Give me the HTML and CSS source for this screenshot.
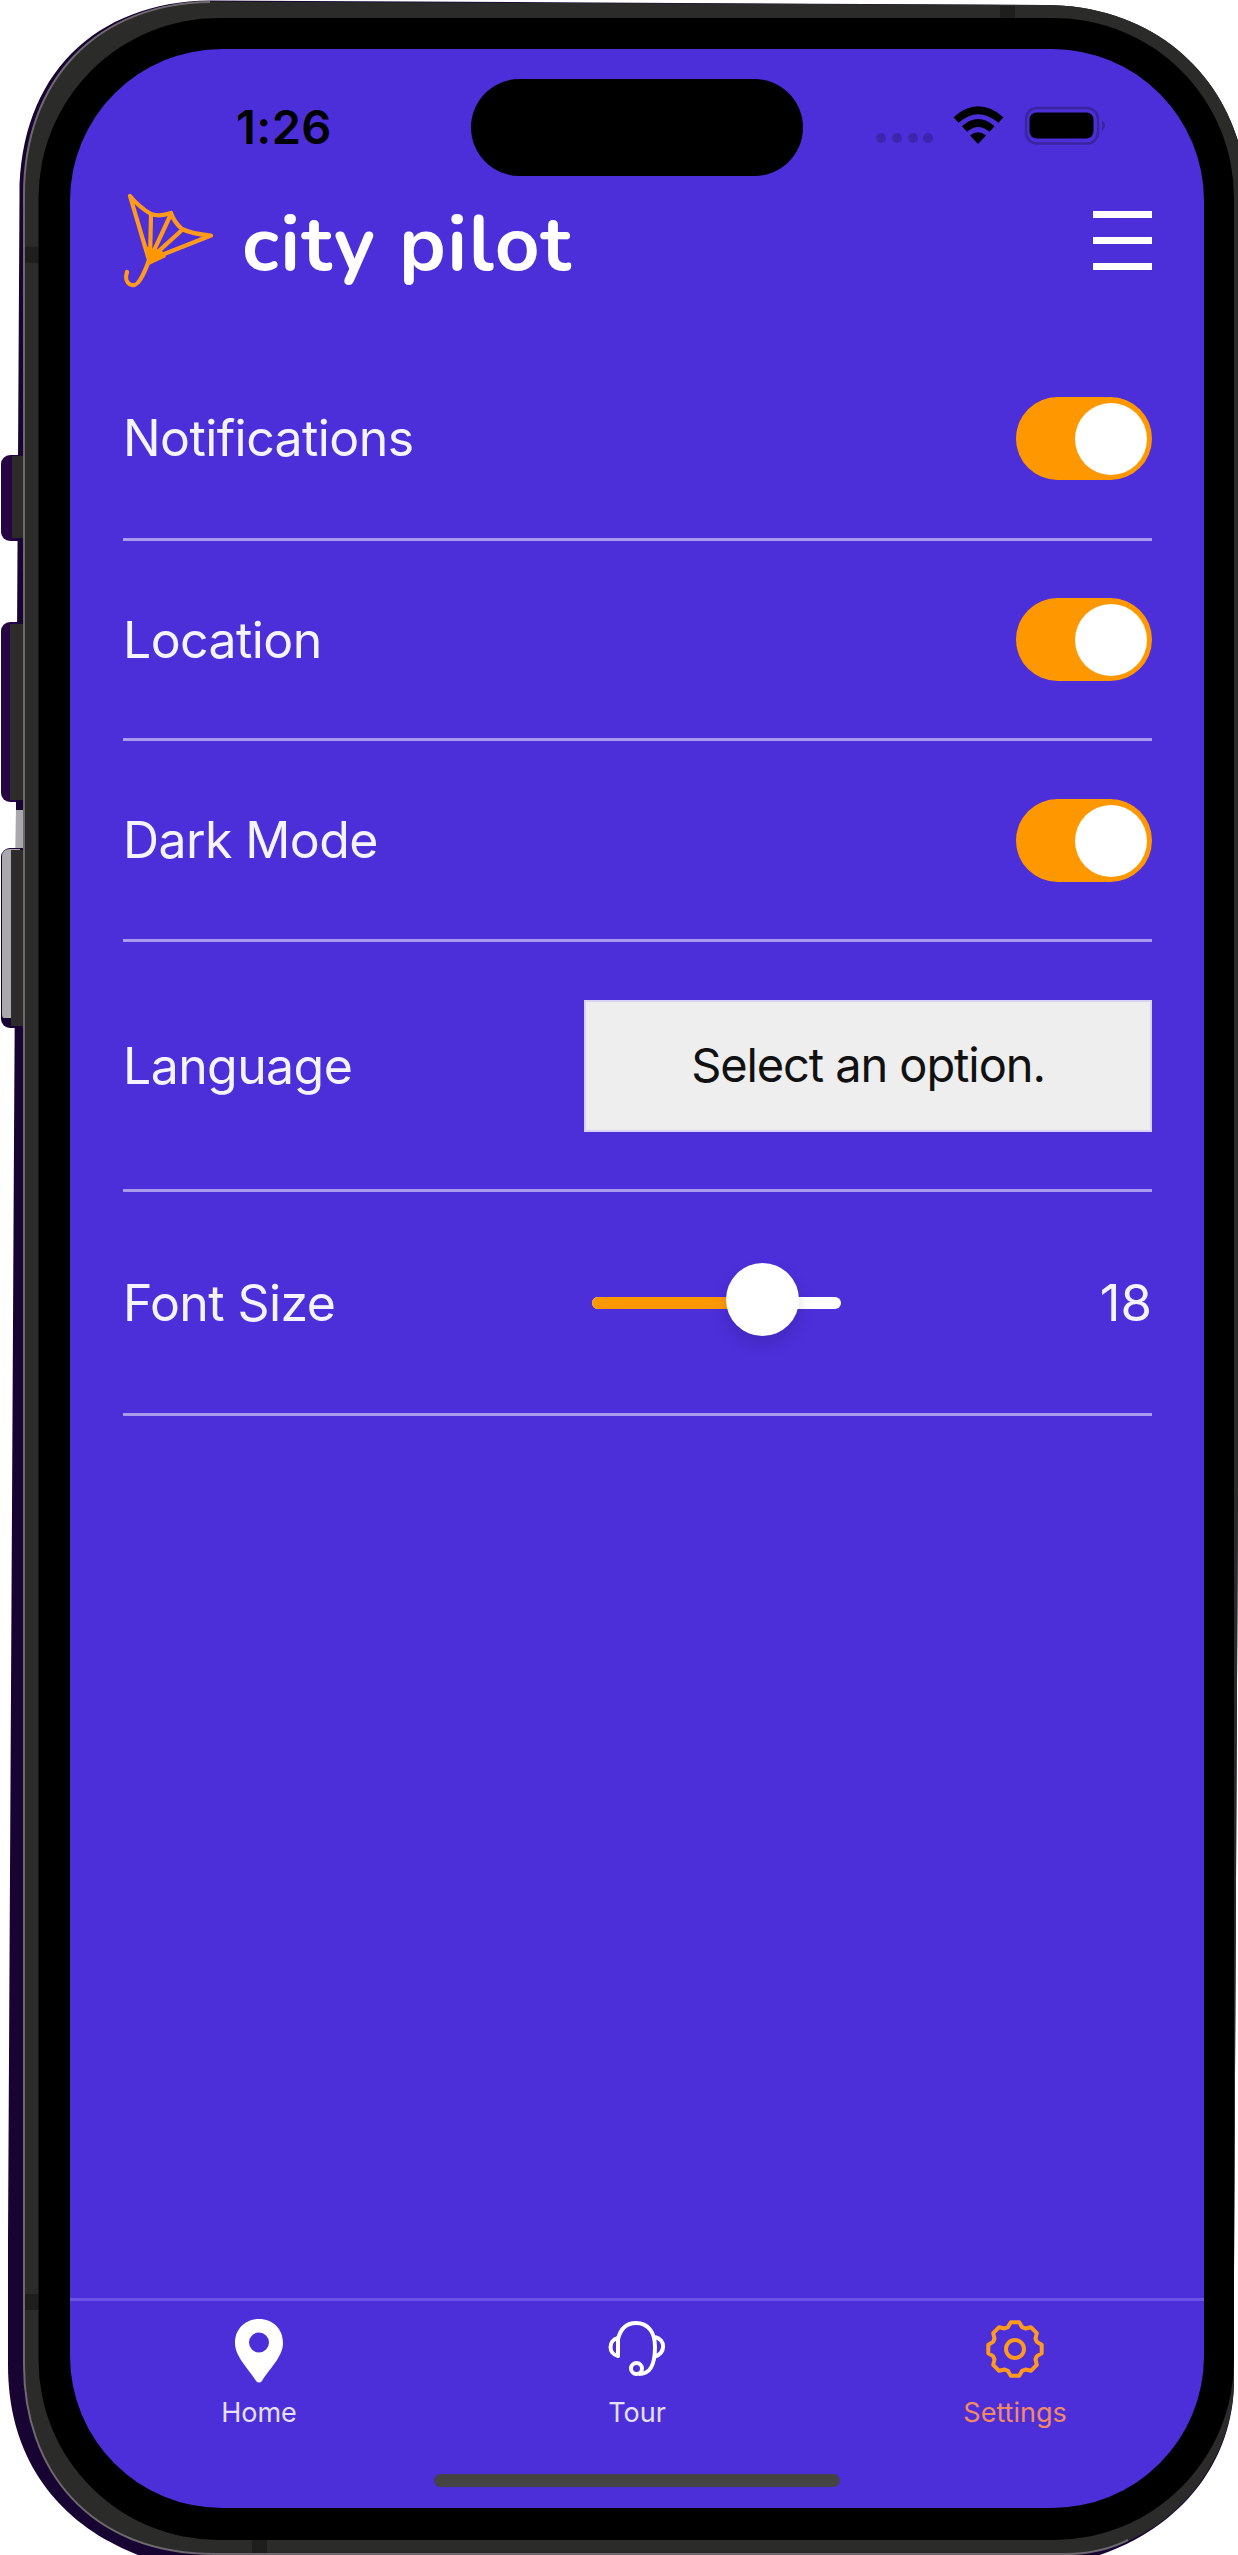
FILE: index.html
```html
<!DOCTYPE html>
<html lang="en">
<head>
<meta charset="utf-8">
<title>city pilot – Settings</title>
<link rel="stylesheet" href="styles.css">
</head>
<body>
<div class="phone">
  <svg class="frame" viewBox="0 0 1238 2555" aria-hidden="true">
    <rect x="1" y="455" width="30" height="86" rx="9" fill="#270545"/>
    <rect x="12" y="456" width="14" height="82" fill="#2d2c2b"/>
    <rect x="1" y="622" width="30" height="180" rx="9" fill="#270545"/>
    <rect x="10" y="624" width="16" height="176" fill="#2d2c2b"/>
    <path d="M210 0.500C95 2 20 75 19.500 195L17 640L14 1140L8 2240V2365C8 2470 70 2535 158 2562H1075C1170 2540 1234 2470 1234 2380V2270L1240 1100V148C1220 70 1150 5 1045 5Z" fill="#180433"/>
    <path d="M16 810H25V1028H16Z" fill="#a9a8ad"/>
    <rect x="1" y="848" width="30" height="180" rx="9" fill="#180433"/>
    <path d="M2 857Q2 849 10 849H20V1018H4Q2 1018 2 1014Z" fill="#a9a8ad"/>
    <rect x="11" y="850" width="15" height="176" fill="#2d2c2b"/>
    <rect x="12" y="456" width="13" height="82" fill="#2d2c2b"/>
    <rect x="10" y="624" width="15" height="176" fill="#2d2c2b"/>
    <path d="M210 1.500C98 3 24 78 23.500 195V2365C23.500 2468 88 2554 215 2554H1065C1160 2554 1234 2470 1234 2380V2270L1240 1100V148C1220 70 1150 5 1045 5Z" fill="#2b2b2a"/>
    <path d="M210 2C98 3.500 24 78 24 195V2365C24 2468 88 2554 215 2554H1065Q1100 2554 1128 2540" fill="none" stroke="#6d696e" stroke-width="2"/>
    <path d="M25 247h14v16H25zM1000 6h15v12h-15zM25 2294h14v16H25zM252 2540h15v13h-15z" fill="#1e1e1d"/>
    <rect x="38.500" y="18" width="1195.500" height="2522" rx="180" fill="#000"/>
  </svg>

  <main class="screen">
    <div class="status">
      <span class="time">1:26</span>
      <span class="island"></span>
      <svg class="indicators" viewBox="0 0 240 50" aria-hidden="true">
        <g fill="#3d26ae"><circle cx="9" cy="38" r="5"/><circle cx="25" cy="38" r="5"/><circle cx="41" cy="38" r="5"/><circle cx="56" cy="38" r="5"/></g>
        <g fill="none" stroke="#000" stroke-width="7.500"><path d="M84 20Q106 0.500 129 20"/><path d="M92.500 29Q106 17 120 29"/></g>
        <path d="M106 44L98 35.500Q106 29 114 35.500Z"/>
        <rect x="154" y="8" width="72" height="35.500" rx="11" fill="none" stroke="#3a249f" stroke-width="2.500"/>
        <rect x="157.500" y="12.500" width="64" height="26" rx="7"/>
        <path d="M230 20Q236 25.500 230 31Z" fill="#3a249f"/>
      </svg>
    </div>

    <header class="header">
      <svg class="logo" viewBox="0 0 92 100" aria-hidden="true">
        <g fill="none" stroke="#ff9a1c" stroke-width="4.200" stroke-linecap="round" stroke-linejoin="round">
          <path d="M8 4L27 68L89 43.500Q70 42 60 37Q52 30 49 21Q38 25 29 22Q17 15 8 4Z"/>
          <path d="M29 23L28 67L49 22M28 67L60 38"/>
          <path d="M27 68Q23 80 18 88C12 98 1 92 5 80"/>
        </g>
        <path d="M23 53L30 58L39 57L44 65L27 73Z" fill="#ff9800"/>
      </svg>
      <span class="brand">city pilot</span>
      <span class="menu"><i></i><i></i><i></i></span>
    </header>

    <section class="settings">
      <div class="row"><span class="label">Notifications</span><span class="switch"></span></div>
      <div class="row"><span class="label">Location</span><span class="switch"></span></div>
      <div class="row"><span class="label">Dark Mode</span><span class="switch"></span></div>
      <div class="row language-row"><span class="label">Language</span><span class="select">Select an option.</span></div>
      <div class="row size-row"><span class="label">Font Size</span><span class="slider"><span class="fill"></span><span class="knob"></span></span><span class="value">18</span></div>
    </section>

    <nav class="tabs">
      <div class="tab">
        <svg class="tab-icon" viewBox="0 0 64 64" aria-hidden="true"><path fill="#fff" fill-rule="evenodd" d="M32 0C18 0 8 10 8 24C8 38 22 50 29 62Q32 65 35 62C42 50 56 38 56 24C56 10 46 0 32 0ZM32 13.500A10 10 0 1 1 32 33.500A10 10 0 0 1 32 13.500Z"/></svg>
        <span>Home</span>
      </div>
      <div class="tab">
        <svg class="tab-icon" viewBox="0 0 64 64" aria-hidden="true"><g fill="none" stroke="#fff" stroke-width="4" stroke-linejoin="round"><path d="M13 20C16 8 23 4 31 4C43 4 50 13 50 28C50 45 46 55 34 55"/><path d="M13 37V19C3 21 3 35 13 37ZM50 18C61 21 61 34 49 38"/><circle cx="31.500" cy="49.500" r="5.500"/></g></svg>
        <span>Tour</span>
      </div>
      <div class="tab active">
        <svg class="tab-icon" viewBox="0 0 64 64" aria-hidden="true"><g fill="none" stroke="#ff9a1f" stroke-width="4" stroke-linejoin="round"><path d="M36.200 3.300L39.100 8.100L42.400 9.500L47.900 8.200L53.800 14.100L52.500 19.600L53.900 22.900L58.700 25.800V34.200L53.900 37.100L52.500 40.400L53.800 45.900L47.900 51.800L42.400 50.500L39.100 51.900L36.200 56.700H27.800L24.900 51.900L21.600 50.500L16.100 51.800L10.200 45.900L11.500 40.400L10.100 37.100L5.300 34.200V25.800L10.100 22.900L11.500 19.600L10.200 14.100L16.100 8.200L21.600 9.500L24.900 8.100L27.800 3.300Z"/><circle cx="32" cy="30" r="9"/></g></svg>
        <span>Settings</span>
      </div>
    </nav>
    <span class="home-indicator"></span>
  </main>
</div>
</body>
</html>
```
FILE: styles.css
```css
* { box-sizing: border-box; }
body { margin: 0; background: #fff; }
.phone { position: relative; width: 1238px; height: 2555px; padding: 49px 34px 47px 70px; overflow: hidden; font-family: Inter, "Liberation Sans", sans-serif; }
.frame { position: absolute; left: 0; top: 0; width: 1238px; height: 2555px; }
.screen { position: relative; display: flex; flex-direction: column; height: 2459px; background: #4c2fd9; border-radius: 152px; overflow: hidden; white-space: nowrap; }
.status { display: grid; grid-template-columns: 401px 332px 1fr; height: 127px; padding-top: 30px; }
.time { padding: 20px 0 0 166px; font-size: 47px; line-height: 56px; font-weight: 600; color: #000; letter-spacing: 0.4px; }
.island { height: 97px; border-radius: 49px; background: #000; }
.indicators { width: 240px; height: 50px; margin: 21px 0 0 69px; }
.header { display: flex; align-items: flex-start; height: 162px; padding: 16px 52px 0 52px; }
.logo { width: 92px; height: 100px; flex: none; }
.brand { margin-left: 28px; font-family: Nunito, "Open Sans", sans-serif; font-weight: 700; font-size: 78px; line-height: 105px; letter-spacing: 1.5px; color: #fff; }
.menu { display: flex; flex-direction: column; gap: 19px; margin: 19px 0 0 auto; width: 59px; }
.menu i { height: 7px; background: #fff; }
.settings { display: flex; flex-direction: column; padding: 0 52px 0 53px; }
.row { display: flex; align-items: center; justify-content: space-between; height: 200px; border-bottom: 3px solid #a99aec; color: #f6f3ff; }
.row:first-child { height: 203px; }
.row:nth-child(3) { height: 201px; }
.label { font-size: 50px; line-height: 60px; letter-spacing: -0.6px; }
.switch { display: flex; justify-content: flex-end; width: 136px; height: 83px; padding: 6px 5px; border-radius: 42px; background: #ff9800; }
.switch::after { content: ""; width: 72px; height: 72px; border-radius: 50%; background: #fff; }
.row.language-row { height: 250px; }
.select { width: 568px; height: 132px; background: #eee; border: 2px solid #d8d3f4; color: #111; font-size: 47px; line-height: 126px; letter-spacing: -1.1px; text-align: center; }
.row.size-row { display: grid; grid-template-columns: 469px 249px 1fr; height: 224px; }
.slider { position: relative; height: 12px; border-radius: 6px; background: #fff; }
.fill { display: block; width: 150px; height: 12px; border-radius: 6px; background: #ff9800; }
.knob { position: absolute; left: 134px; top: -34px; width: 73px; height: 73px; border-radius: 50%; background: #fff; box-shadow: 0 8px 16px rgba(0,0,0,.13); }
.value { text-align: right; font-size: 51px; line-height: 60px; }
.tabs { display: grid; grid-template-columns: repeat(3, 1fr); height: 162px; margin-top: auto; border-top: 3px solid #6c53e4; padding-top: 18px; color: #e6e0fc; font-size: 27px; line-height: 32px; }
.tab { display: flex; flex-direction: column; align-items: center; gap: 14px; }
.tab-icon { width: 64px; height: 64px; }
.active { color: #f38a65; }
.home-indicator { width: 406px; height: 13px; margin: 14px auto 21px; border-radius: 7px; background: #444; }
```
